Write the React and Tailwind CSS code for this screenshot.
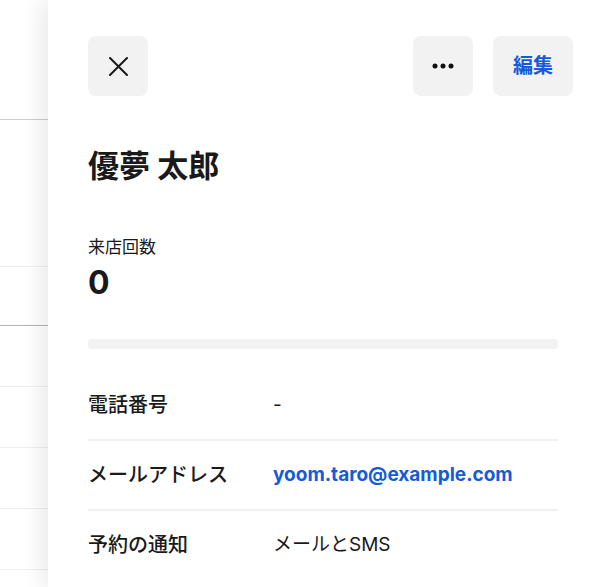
import React from "react";

const font = { fontFamily: 'Inter, "Noto Sans CJK JP", sans-serif' };

function Row({ label, children, last }) {
  return (
    <div className={`flex h-[68px] items-center ${last ? "" : "border-b-2 border-[#f0f0f0] box-content"}`}>
      <div className="w-[185px] shrink-0 text-[20px] font-medium text-[#1a1a1a]">{label}</div>
      <div className="text-[19px] text-[#1a1a1a]">{children}</div>
    </div>
  );
}

export default function App() {
  return (
    <div className="relative h-[587px] w-[594px] overflow-hidden bg-white" style={font}>
      {/* backdrop list */}
      <div className="flex flex-col">
        <div className="h-[120px] border-b border-[#cfcfcf] box-border" />
        <div className="h-[147px] border-b border-[#efefef] box-border" />
        <div className="h-[59px] border-b border-[#b5b5b5] box-border" />
        <div className="h-[61px] border-b border-[#efefef] box-border" />
        <div className="h-[61px] border-b border-[#efefef] box-border" />
        <div className="h-[61px] border-b border-[#efefef] box-border" />
        <div className="h-[61px] border-b border-[#efefef] box-border" />
      </div>

      {/* side panel */}
      <div className="absolute bottom-0 left-[48px] right-0 top-0 bg-white pl-[40px] pr-[21px] pt-[36px] shadow-[-6px_0_22px_rgba(0,0,0,0.09)]">
        <div className="flex items-center">
          <button className="flex h-[60px] w-[60px] items-center justify-center rounded-[8px] bg-[#f2f2f2]">
            <svg width="19" height="19" viewBox="0 0 19 19" fill="none">
              <path d="M1 1L18 18M18 1L1 18" stroke="#1a1a1a" strokeWidth="2" strokeLinecap="round" />
            </svg>
          </button>
          <div className="ml-auto flex gap-[20px]">
            <button className="flex h-[60px] w-[60px] items-center justify-center rounded-[8px] bg-[#f2f2f2]">
              <svg width="22" height="6" viewBox="0 0 22 6" fill="#111">
                <circle cx="3" cy="3" r="2.5" />
                <circle cx="11" cy="3" r="2.5" />
                <circle cx="19" cy="3" r="2.5" />
              </svg>
            </button>
            <button className="flex h-[60px] w-[80px] items-center justify-center rounded-[8px] bg-[#f2f2f2] text-[20px] font-bold text-[#135bd8]">
              編集
            </button>
          </div>
        </div>

        <div className="mr-[15px]">
          <h1 className="mt-[52px] text-[31px] font-bold leading-[36px] text-[#1a1a1a]">優夢 太郎</h1>

          <div className="mt-[53px] text-[17px] leading-[20px] text-[#1a1a1a]">来店回数</div>
          <div className="mt-[8px] text-[32px] font-bold leading-[36px] text-[#1a1a1a]">0</div>

          <div className="mt-[38px] h-[10px] rounded-[4px] bg-[#f2f2f2]" />

          <div className="mt-[22px] flex flex-col">
            <Row label="電話番号">-</Row>
            <Row label="メールアドレス">
              <span className="font-bold text-[#135bd8]">yoom.taro@example.com</span>
            </Row>
            <Row label="予約の通知" last>メールとSMS</Row>
          </div>
        </div>
      </div>
    </div>
  );
}
